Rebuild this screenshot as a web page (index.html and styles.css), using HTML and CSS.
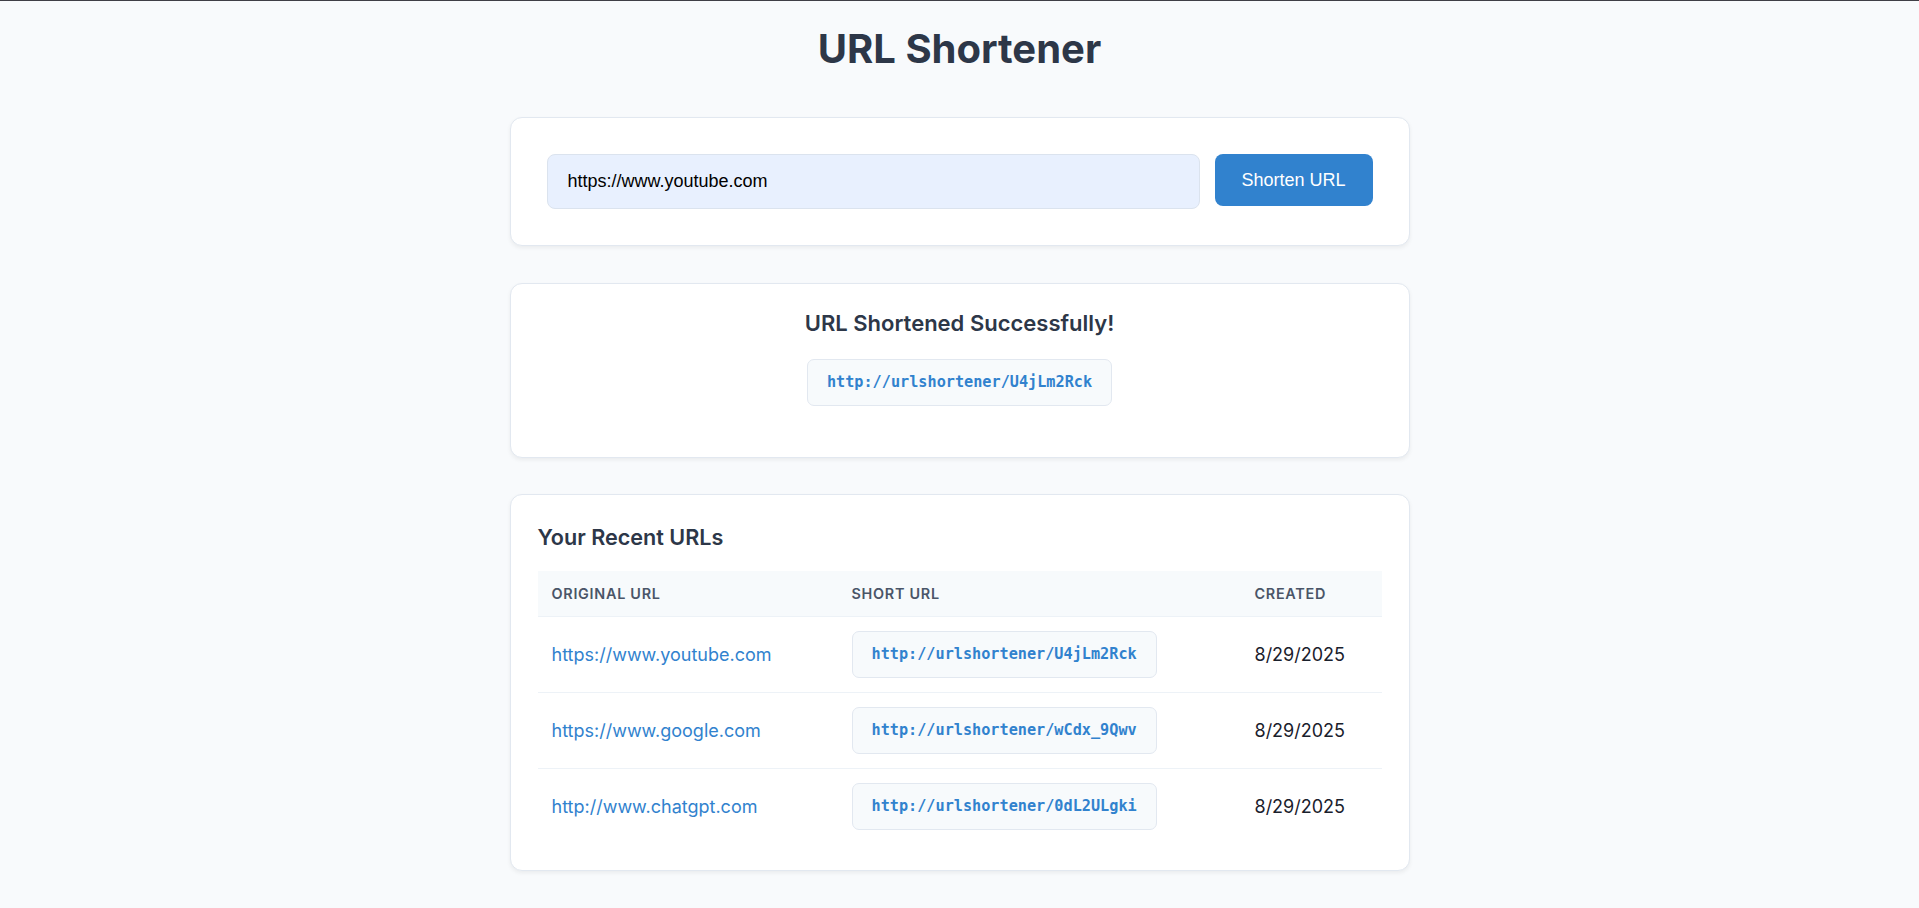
FILE: index.html
```html
<!DOCTYPE html>
<html lang="en">
<head>
<meta charset="utf-8">
<title>URL Shortener</title>
<link rel="stylesheet" href="styles.css">
</head>
<body>
<div class="container">
  <h1 class="title">URL Shortener</h1>

  <div class="card card-form">
    <form class="form" onsubmit="return false;">
      <input class="url-input" type="text" value="https://www.youtube.com">
      <button class="btn" type="submit">Shorten URL</button>
    </form>
  </div>

  <div class="card card-result">
    <h2 class="result-title">URL Shortened Successfully!</h2>
    <div class="short-box">http://urlshortener/U4jLm2Rck</div>
  </div>

  <div class="card card-recent">
    <h3 class="recent-title">Your Recent URLs</h3>
    <table class="table">
      <thead>
        <tr>
          <th class="col-orig">Original URL</th>
          <th class="col-short">Short URL</th>
          <th class="col-created">Created</th>
        </tr>
      </thead>
      <tbody>
        <tr>
          <td><a class="link" href="#">https://www.youtube.com</a></td>
          <td><span class="short-pill">http://urlshortener/U4jLm2Rck</span></td>
          <td class="date">8/29/2025</td>
        </tr>
        <tr>
          <td><a class="link" href="#">https://www.google.com</a></td>
          <td><span class="short-pill">http://urlshortener/wCdx_9Qwv</span></td>
          <td class="date">8/29/2025</td>
        </tr>
        <tr>
          <td><a class="link" href="#">http://www.chatgpt.com</a></td>
          <td><span class="short-pill">http://urlshortener/0dL2ULgki</span></td>
          <td class="date">8/29/2025</td>
        </tr>
      </tbody>
    </table>
  </div>
</div>
</body>
</html>
```

FILE: styles.css
```css
* { box-sizing: border-box; }

html, body {
  margin: 0;
  padding: 0;
}

body {
  background: #f8fafc;
  border-top: 1px solid #3f3f46;
  font-family: Inter, "Noto Sans", sans-serif;
  color: #2d3748;
  min-height: 908px;
}

.container {
  width: 900px;
  margin: 0 auto;
  padding-top: 24px;
}

.title {
  margin: 0 0 44px;
  text-align: center;
  font-size: 40px;
  font-weight: 700;
  line-height: 1.21;
  color: #2d3748;
}

.card {
  background: #ffffff;
  border: 1px solid #e2e8f0;
  border-radius: 12px;
  box-shadow: 0 2px 4px rgba(0, 0, 0, 0.06);
  margin-bottom: 37px;
}

.card-form {
  padding: 36px;
}

.form {
  display: flex;
  gap: 15px;
  align-items: flex-start;
  margin: 0;
}

.url-input {
  flex: 1;
  height: 55px;
  padding: 0 20px;
  font-family: "Liberation Sans", Arial, sans-serif;
  font-size: 18px;
  color: #000;
  background: #e8f0fe;
  border: 1px solid #dbe3ee;
  border-radius: 8px;
  outline: none;
}

.btn {
  width: 158px;
  height: 52px;
  padding: 0;
  font-family: "Liberation Sans", Arial, sans-serif;
  font-size: 18px;
  color: #ffffff;
  background: #3182ce;
  border: none;
  border-radius: 8px;
  cursor: pointer;
}

.card-result {
  padding: 26px 26px 51px;
  margin-bottom: 36px;
  display: flex;
  flex-direction: column;
  align-items: center;
}

.result-title {
  margin: 0 0 22px;
  font-size: 22px;
  font-weight: 600;
  line-height: 1.21;
  color: #2d3748;
}

.short-box,
.short-pill {
  display: inline-block;
  font-family: "DejaVu Sans Mono", "Liberation Mono", monospace;
  font-weight: 700;
  font-size: 15.2px;
  line-height: 17px;
  color: #3182ce;
  background: #f7fafc;
  border: 1px solid #e2e8f0;
  border-radius: 7px;
  padding: 14px 19px;
}

.card-recent {
  padding: 29px 27px 26px;
}

.recent-title {
  margin: 0 0 21px;
  font-size: 21.6px;
  font-weight: 600;
  line-height: 1.21;
  color: #2d3748;
}

.table {
  width: 100%;
  border-collapse: collapse;
  table-layout: fixed;
}

.col-orig { width: 300px; }
.col-short { width: 403px; }
.col-created { width: auto; }

.table th {
  text-align: left;
  background: #f7fafc;
  padding: 14px 14px;
  font-size: 14.4px;
  font-weight: 600;
  line-height: 17px;
  text-transform: uppercase;
  letter-spacing: 0.05em;
  color: #4a5568;
  border-bottom: 1px solid #edf2f7;
}

.table td {
  padding: 14px 14px;
  border-bottom: 1px solid #edf2f7;
  vertical-align: middle;
  font-size: 18px;
}

.table tbody tr:last-child td {
  border-bottom: none;
}

.link {
  color: #3182ce;
  text-decoration: none;
}

.date {
  color: #1a202c;
}
```
